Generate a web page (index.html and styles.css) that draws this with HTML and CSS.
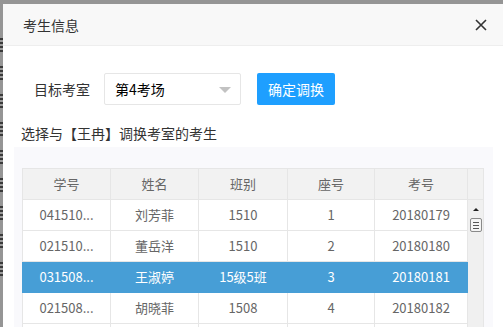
FILE: index.html
```html
<!DOCTYPE html>
<html lang="zh-CN">
<head>
    <meta charset="UTF-8">
    <title>考生信息</title>
    <link rel="stylesheet" href="styles.css">
</head>
<body>
    <div class="page">
        <!-- the page behind the layer, only a sliver shows -->
        <div class="behind">
            <i></i><i></i><i></i><i></i><i></i><i></i><i></i><i></i><i></i>
        </div>

        <div class="layer">
            <div class="layer-title">
                <span>考生信息</span>
                <svg class="layer-close" width="12" height="12" viewBox="0 0 12 12">
                    <path d="M1 1 L11 11 M11 1 L1 11" stroke="#333" stroke-width="1.6" fill="none"/>
                </svg>
            </div>

            <div class="layer-content">
                <div class="form-row">
                    <label class="form-label">目标考室</label>
                    <div class="select">
                        <span>第4考场</span>
                        <i class="caret"></i>
                    </div>
                    <button class="btn">确定调换</button>
                </div>

                <p class="tip">选择与【王冉】调换考室的考生</p>

                <div class="panel">
                    <div class="table-wrap">
                        <table class="grid">
                            <colgroup>
                                <col style="width: 88px">
                                <col style="width: 88px">
                                <col style="width: 89px">
                                <col style="width: 87px">
                                <col style="width: 93px">
                            </colgroup>
                            <thead>
                                <tr>
                                    <th>学号</th>
                                    <th>姓名</th>
                                    <th>班别</th>
                                    <th>座号</th>
                                    <th>考号</th>
                                </tr>
                            </thead>
                            <tbody>
                                <tr>
                                    <td>041510...</td>
                                    <td>刘芳菲</td>
                                    <td>1510</td>
                                    <td>1</td>
                                    <td>20180179</td>
                                </tr>
                                <tr>
                                    <td>021510...</td>
                                    <td>董岳洋</td>
                                    <td>1510</td>
                                    <td>2</td>
                                    <td>20180180</td>
                                </tr>
                                <tr class="selected">
                                    <td>031508...</td>
                                    <td>王淑婷</td>
                                    <td>15级5班</td>
                                    <td>3</td>
                                    <td>20180181</td>
                                </tr>
                                <tr>
                                    <td>021508...</td>
                                    <td>胡晓菲</td>
                                    <td>1508</td>
                                    <td>4</td>
                                    <td>20180182</td>
                                </tr>
                                <tr class="empty">
                                    <td></td>
                                    <td></td>
                                    <td></td>
                                    <td></td>
                                    <td></td>
                                </tr>
                            </tbody>
                        </table>

                        <div class="vscroll">
                            <div class="vscroll-head"></div>
                            <div class="vscroll-track">
                                <i class="arrow-up"></i>
                                <div class="thumb">
                                    <i></i><i></i><i></i>
                                </div>
                            </div>
                        </div>
                    </div>
                </div>
            </div>
        </div>
    </div>
</body>
</html>
```

FILE: styles.css
```css
body {
    margin: 0;
    background-color: #959595;
    font-family: "Noto Sans CJK SC", "Noto Sans", sans-serif;
    font-size: 14px;
    color: #333;
    overflow: hidden;
}

.page {
    display: flex;
    height: 327px;
    padding-top: 4px;
    box-sizing: border-box;
    overflow: hidden;
}

.behind {
    width: 3px;
    flex-shrink: 0;
    display: flex;
    flex-direction: column;
    gap: 14px;
    padding-top: 34px;
}

.behind i {
    display: block;
    width: 3px;
    height: 14px;
    background: repeating-linear-gradient(#3a3a3a 0 2px, #9a9a9a 2px 4px);
}

.layer {
    flex: 1;
    background: #fff;
    display: flex;
    flex-direction: column;
    min-height: 0;
}

.layer-title {
    height: 41px;
    flex-shrink: 0;
    background: #f8f8f8;
    border-bottom: 1px solid #eee;
    display: flex;
    align-items: center;
    justify-content: space-between;
    padding: 0 17px 0 20px;
    font-size: 14px;
    color: #333;
}

.layer-close {
    display: block;
}

.layer-content {
    flex: 1;
    min-height: 0;
    padding-top: 27px;
    border-right: 1px solid #e2e2e2;
    display: flex;
    flex-direction: column;
}

.form-row {
    display: flex;
    align-items: center;
    padding-left: 31px;
}

.form-label {
    width: 70px;
    line-height: 20px;
    color: #333;
}

.select {
    width: 137px;
    height: 32px;
    box-sizing: border-box;
    border: 1px solid #e6e6e6;
    border-radius: 2px;
    display: flex;
    align-items: center;
    justify-content: space-between;
    padding: 0 9px 0 10px;
    color: #000;
}

.caret {
    width: 0;
    height: 0;
    border-left: 6px solid transparent;
    border-right: 6px solid transparent;
    border-top: 6px solid #c2c2c2;
    margin-top: 2px;
}

.btn {
    margin-left: 16px;
    width: 78px;
    height: 32px;
    border: none;
    border-radius: 2px;
    background: #1e9fff;
    color: #fff;
    font-family: inherit;
    font-size: 14px;
    padding: 0;
}

.tip {
    margin: 18px 0 4px 18px;
    line-height: 20px;
    color: #333;
}

.panel {
    flex: 1;
    min-height: 0;
    overflow: hidden;
    margin: 0 10px 0 11px;
    background: #f9f9fc;
    padding: 21px 9px 0 8px;
}

.table-wrap {
    display: flex;
    align-items: flex-start;
}

.grid {
    border-collapse: collapse;
    table-layout: fixed;
    width: 446px;
    font-size: 13px;
    color: #666;
    background: #fff;
}

.grid th,
.grid td {
    height: 30px;
    padding: 0 6px;
    border: 1px solid #e6e6e6;
    text-align: center;
    font-weight: normal;
    white-space: nowrap;
    overflow: hidden;
    line-height: 20px;
}

.grid th {
    background: #f2f2f2;
}

.grid tr.selected td {
    background: #479ed6;
    color: #fff;
    border-color: #479ed6;
}

.vscroll {
    width: 16px;
    flex-shrink: 0;
}

.vscroll-head {
    height: 30px;
    background: #f2f2f2;
    border: 1px solid #e6e6e6;
    border-left: none;
}

.vscroll-track {
    height: 160px;
    background: #f0f0f0;
    border-right: 1px solid #e6e6e6;
    display: flex;
    flex-direction: column;
    align-items: center;
    padding-top: 8px;
}

.arrow-up {
    width: 0;
    height: 0;
    border-left: 3px solid transparent;
    border-right: 3px solid transparent;
    border-bottom: 3px solid #222;
}

.thumb {
    margin-top: 7px;
    width: 12px;
    height: 14px;
    box-sizing: border-box;
    border: 1px solid #8a8a8a;
    border-radius: 2px;
    background: #f4f4f4;
    display: flex;
    flex-direction: column;
    justify-content: center;
    align-items: center;
    gap: 2px;
}

.thumb i {
    display: block;
    width: 6px;
    height: 1px;
    background: #555;
}
```
